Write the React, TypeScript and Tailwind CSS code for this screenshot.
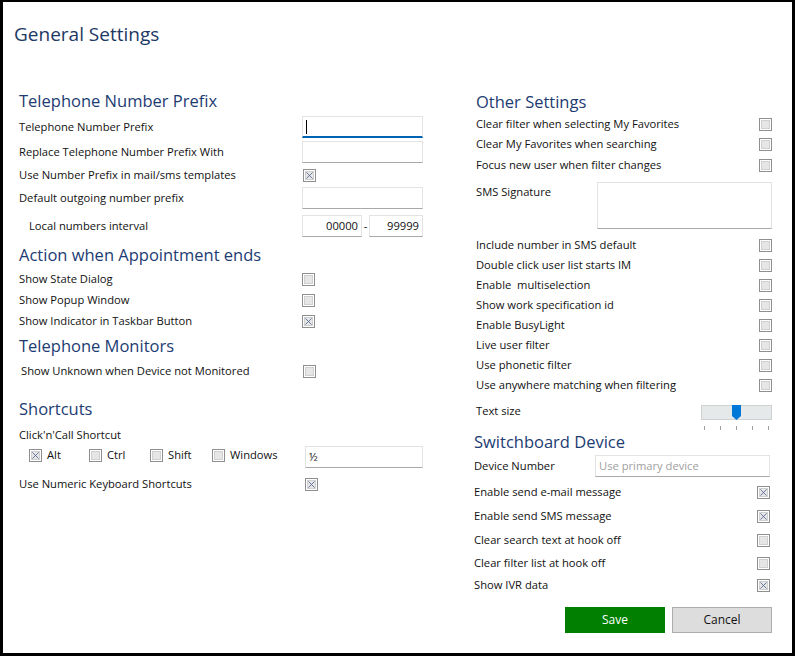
import React from "react";

const FONT = { fontFamily: '"Open Sans", "Noto Sans", sans-serif' };

function Check({ checked = false }: { checked?: boolean }) {
  return (
    <div className="w-[13px] h-[13px] border border-[#8f8f8f] bg-white p-[1px] shrink-0">
      <div className="w-full h-full bg-[#e6e6e6] border border-[#d0d0d0] relative">
        {checked && (
          <svg viewBox="0 0 9 9" className="absolute inset-0 w-full h-full">
            <path d="M0.5 0.5 L8.5 8.5 M8.5 0.5 L0.5 8.5" stroke="#4b5c8f" strokeWidth="1" />
          </svg>
        )}
      </div>
    </div>
  );
}

function TextBox({
  w,
  value,
  placeholder,
  focused = false,
  right = false,
  h = "h-[22px]",
}: {
  w: string;
  value?: string;
  placeholder?: string;
  focused?: boolean;
  right?: boolean;
  h?: string;
}) {
  return (
    <div
      className={`${w} ${h} bg-white border border-[#e3e3e3] ${
        focused ? "border-b-2 border-b-[#0063b1]" : "border-b-[#a8a8a8]"
      } flex items-center px-[3px] text-[11.2px] text-[#111] ${right ? "justify-end" : ""}`}
    >
      {focused && <div className="w-px h-[14px] bg-black" />}
      {value && <span>{value}</span>}
      {placeholder && <span className="text-[#a0a0a0]">{placeholder}</span>}
    </div>
  );
}

function Heading({ children, className = "" }: { children: React.ReactNode; className?: string }) {
  return (
    <div className={`h-[22px] flex items-center text-[16.5px] text-[#1c3c72] leading-none ${className}`}>
      {children}
    </div>
  );
}

function CheckRow({
  label,
  checked,
  className = "",
  boxLeft,
}: {
  label: string;
  checked?: boolean;
  className?: string;
  boxLeft?: string;
}) {
  return (
    <div className={`h-[20px] flex items-center ${className}`}>
      <div className={`whitespace-pre ${boxLeft ?? "flex-1"}`}>{label}</div>
      <Check checked={checked} />
    </div>
  );
}

function FieldRow({
  label,
  className = "",
  children,
}: {
  label: string;
  className?: string;
  children: React.ReactNode;
}) {
  return (
    <div className={`h-[22px] flex items-center ${className}`}>
      <div className="w-[283px]">{label}</div>
      {children}
    </div>
  );
}

function ShortcutKey({ label, checked, w }: { label: string; checked?: boolean; w: string }) {
  return (
    <div className={`flex items-center gap-[5px] ${w}`}>
      <Check checked={checked} />
      <span>{label}</span>
    </div>
  );
}

function Slider() {
  const ticks = [0, 1, 2, 3, 4];
  return (
    <div className="w-[71px] mt-[4px]">
      <div className="h-[15px] bg-[#e6e9e9] border border-[#cfd2d2] relative">
        <svg viewBox="0 0 9 15" className="absolute left-[30px] top-[-1px] w-[9px] h-[15px]">
          <path d="M0 0 H9 V11 L4.5 15 L0 11 Z" fill="#0078d7" />
        </svg>
      </div>
      <div className="flex justify-between px-[3px] mt-[6px]">
        {ticks.map((t) => (
          <div key={t} className="w-px h-[4px] bg-[#a0a0a0]" />
        ))}
      </div>
    </div>
  );
}

export default function App() {
  return (
    <div
      className="w-[795px] h-[656px] bg-white border-t-2 border-l-[3px] border-r-[3px] border-b-[3px] border-black text-[11.2px] text-[#111] leading-none overflow-hidden"
      style={FONT}
    >
      <div className="pl-[11px] pt-[20px] text-[19px] text-[#1c3864] leading-[24px]">General Settings</div>

      <div className="flex">
        {/* left column */}
        <div className="ml-[16px] w-[404px] flex flex-col mt-[44px]">
          <Heading>Telephone Number Prefix</Heading>
          <FieldRow label="Telephone Number Prefix" className="mt-[4px]">
            <TextBox w="w-[121px]" focused />
          </FieldRow>
          <FieldRow label="Replace Telephone Number Prefix With" className="mt-[3px]">
            <TextBox w="w-[121px]" />
          </FieldRow>
          <div className="h-[20px] flex items-center mt-[2px]">
            <div className="w-[284px]">Use Number Prefix in mail/sms templates</div>
            <Check checked />
          </div>
          <FieldRow label="Default outgoing number prefix" className="mt-[2px]">
            <TextBox w="w-[121px]" />
          </FieldRow>
          <div className="h-[22px] flex items-center mt-[6px]">
            <div className="w-[283px] pl-[10px]">Local numbers interval</div>
            <TextBox w="w-[60px]" value="00000" right />
            <div className="w-[7px] text-center">-</div>
            <TextBox w="w-[54px]" value="99999" right />
          </div>

          <Heading className="mt-[7px]">Action when Appointment ends</Heading>
          <CheckRow label="Show State Dialog" boxLeft="w-[283px]" className="mt-[3px]" />
          <CheckRow label="Show Popup Window" boxLeft="w-[283px]" className="mt-[1px]" />
          <CheckRow label="Show Indicator in Taskbar Button" checked boxLeft="w-[283px]" className="mt-[1px]" />

          <Heading className="mt-[4px]">Telephone Monitors</Heading>
          <CheckRow
            label="Show Unknown when Device not Monitored"
            boxLeft="w-[282px]"
            className="mt-[4px] pl-[2px]"
          />

          <Heading className="mt-[17px]">Shortcuts</Heading>
          <div className="h-[20px] flex items-center mt-[5px]">Click'n'Call Shortcut</div>
          <div className="h-[22px] flex items-start mt-[1px] pl-[10px]">
            <div className="flex items-center h-[18px]">
              <ShortcutKey label="Alt" checked w="w-[60px]" />
              <ShortcutKey label="Ctrl" w="w-[61px]" />
              <ShortcutKey label="Shift" w="w-[62px]" />
              <ShortcutKey label="Windows" w="w-[93px]" />
            </div>
            <TextBox w="w-[118px]" value="½" />
          </div>
          <div className="h-[20px] flex items-center mt-[6px]">
            <div className="w-[286px]">Use Numeric Keyboard Shortcuts</div>
            <Check checked />
          </div>
        </div>

        {/* right column */}
        <div className="ml-[53px] w-[296px] flex flex-col mt-[45px]">
          <Heading>Other Settings</Heading>
          <CheckRow label="Clear filter when selecting My Favorites" className="mt-[1px]" />
          <CheckRow label="Clear My Favorites when searching" />
          <CheckRow label="Focus new user when filter changes" className="mt-[1px]" />
          <div className="flex mt-[7px]">
            <div className="w-[121px] pt-[2px] leading-[16px]">SMS Signature</div>
            <TextBox w="w-[175px]" h="h-[47px]" />
          </div>
          <CheckRow label="Include number in SMS default" className="mt-[6px]" />
          <CheckRow label="Double click user list starts IM" />
          <CheckRow label="Enable  multiselection" />
          <CheckRow label="Show work specification id" />
          <CheckRow label="Enable BusyLight" />
          <CheckRow label="Live user filter" />
          <CheckRow label="Use phonetic filter" />
          <CheckRow label="Use anywhere matching when filtering" />
          <div className="flex items-start mt-[6px]">
            <div className="w-[225px] h-[20px] flex items-center">Text size</div>
            <Slider />
          </div>

          <div className="-ml-[2px] w-[296px] flex flex-col">
            <Heading className="mt-[1px]">Switchboard Device</Heading>
            <div className="h-[22px] flex items-center mt-[2px]">
              <div className="w-[121px]">Device Number</div>
              <TextBox w="w-[175px]" placeholder="Use primary device" />
            </div>
            <CheckRow label="Enable send e-mail message" checked className="h-[22px] mt-[4px]" />
            <CheckRow label="Enable send SMS message" checked className="h-[22px] mt-[2px]" />
            <CheckRow label="Clear search text at hook off" className="h-[22px] mt-[2px]" />
            <CheckRow label="Clear filter list at hook off" className="h-[22px] mt-[1px]" />
            <CheckRow label="Show IVR data" checked className="h-[22px]" />
          </div>

          <div className="flex justify-end gap-[7px] mt-[11px]">
            <div className="w-[100px] h-[26px] bg-[#007f00] text-white flex items-center justify-center text-[12px]">
              Save
            </div>
            <div className="w-[100px] h-[26px] bg-[#dddddd] border border-[#adadad] text-[#111] flex items-center justify-center text-[12px]">
              Cancel
            </div>
          </div>
        </div>
      </div>
    </div>
  );
}
